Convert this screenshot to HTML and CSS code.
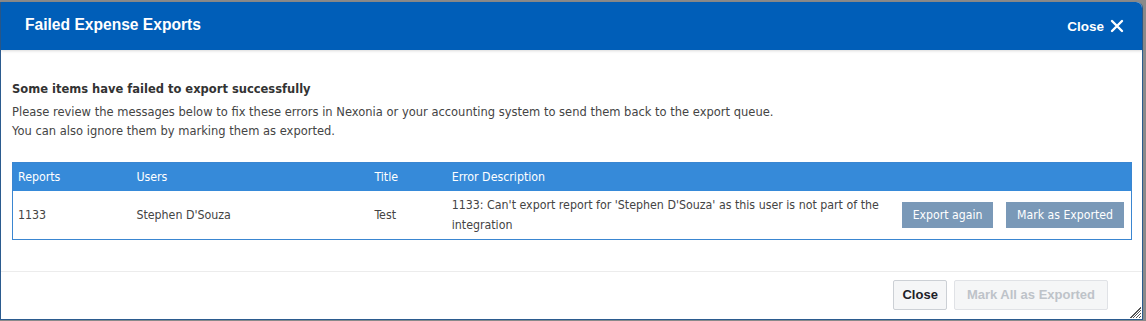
FILE: index.html
```html
<!DOCTYPE html>
<html lang="en">
<head>
    <meta charset="UTF-8" />
    <title>Failed Expense Exports</title>
    <link rel="stylesheet" href="styles.css">
</head>
<body>
    <div class="dialog">
        <div class="dialog-head">
            <h2>Failed Expense Exports</h2>
            <a class="head-close">Close
                <svg width="14" height="14" viewBox="0 0 14 14"><path d="M2 2L12 12M12 2L2 12" stroke="#fff" stroke-width="2.4" stroke-linecap="round"/></svg>
            </a>
        </div>
        <div class="dialog-body">
            <p class="lead">Some items have failed to export successfully</p>
            <p>Please review the messages below to fix these errors in Nexonia or your accounting system to send them back to the export queue.</p>
            <p>You can also ignore them by marking them as exported.</p>

            <table class="errors">
                <thead>
                    <tr>
                        <th class="c-report">Reports</th>
                        <th class="c-user">Users</th>
                        <th class="c-title">Title</th>
                        <th class="c-desc">Error Description</th>
                        <th class="c-actions"></th>
                    </tr>
                </thead>
                <tbody>
                    <tr>
                        <td>1133</td>
                        <td>Stephen D'Souza</td>
                        <td>Test</td>
                        <td>1133: Can't export report for 'Stephen D'Souza' as this user is not part of the integration</td>
                        <td class="actions">
                            <button class="btn-row">Export again</button>
                            <button class="btn-row">Mark as Exported</button>
                        </td>
                    </tr>
                </tbody>
            </table>
        </div>
        <div class="dialog-foot">
            <button class="btn-foot btn-close">Close</button>
            <button class="btn-foot btn-all" disabled>Mark All as Exported</button>
        </div>
        <div class="grip"></div>
    </div>
</body>
</html>
```

FILE: styles.css
```css
*{
    margin: 0;
    padding: 0;
    box-sizing: border-box;
}
body{
    background: #8a8a8a;
    font-family: "DejaVu Sans", Verdana, sans-serif;
    padding-top: 2px;
}
.dialog{
    position: relative;
    width: 1143px;
    height: 318px;
    background: #fff;
    border: 1px solid #2b5b8f;
    border-top: none;
    border-top-right-radius: 6px;
    display: flex;
    flex-direction: column;
}
.dialog-head{
    height: 48px;
    flex-shrink: 0;
    background: #005eb8;
    border-top-right-radius: 6px;
    display: flex;
    align-items: center;
    justify-content: space-between;
    padding: 0 18px 0 24px;
    box-shadow: 0 1px 3px rgba(0,0,0,.15);
}
.dialog-head h2{
    font: bold 15.6px "Liberation Sans", Arial, sans-serif;
    color: #fff;
    margin-top: -3px;
}
.head-close{
    font: bold 13.5px "Liberation Sans", Arial, sans-serif;
    color: #fff;
    display: flex;
    align-items: center;
    gap: 6px;
    cursor: pointer;
}
.dialog-body{
    flex: 1;
    padding: 30px 10px 0 11px;
    font-size: 11.5px;
    color: #444;
}
.dialog-body p{
    line-height: 19px;
}
.dialog-body p.lead{
    font-weight: bold;
    color: #333;
    margin-bottom: 4px;
}
.errors{
    width: 1120px;
    margin-top: 21px;
    border-collapse: collapse;
    border: 1px solid #3a86d1;
    font-family: "DejaVu Sans Condensed", Tahoma, sans-serif;
    font-size: 12.3px;
}
.errors th{
    background: #368ad9;
    color: #fff;
    font-weight: normal;
    text-align: left;
    height: 28px;
    padding: 0 5px;
}
.errors td{
    height: 49px;
    padding: 0 5px;
    color: #444;
    line-height: 20px;
    vertical-align: middle;
}
.c-report{ width: 120px; }
.c-user{ width: 241px; }
.c-title{ width: 78px; }
.c-desc{ width: 447px; }
.actions{
    text-align: right;
    white-space: nowrap;
    padding-right: 7px !important;
}
.btn-row{
    font-family: "DejaVu Sans Condensed", Tahoma, sans-serif;
    font-size: 12.2px;
    color: #fff;
    background: #7a99b8;
    border: none;
    height: 26px;
    padding: 0 11px;
    margin-left: 9px;
}
.dialog-foot{
    height: 48px;
    flex-shrink: 0;
    border-top: 1px solid #ececec;
    display: flex;
    justify-content: flex-end;
    align-items: center;
    gap: 7px;
    padding: 0 34px 2px 0;
}
.btn-foot{
    font: bold 13px "Liberation Sans", Arial, sans-serif;
    color: #1d2129;
    background: #f5f6f7;
    border: 1px solid #ccd0d5;
    border-radius: 2px;
    height: 30px;
    padding: 0 10px;
}
.btn-close{
    padding: 0 8px;
}
.btn-all{
    padding: 0 12px;
}
.btn-foot:disabled{
    color: #bec3c9;
    border-color: #e0e2e6;
}
.grip{
    position: absolute;
    right: 1px;
    bottom: 1px;
    width: 12px;
    height: 12px;
    background: repeating-linear-gradient(135deg, transparent 0 1px, #555 1px 2px);
    clip-path: polygon(100% 0, 100% 100%, 0 100%);
}
```
